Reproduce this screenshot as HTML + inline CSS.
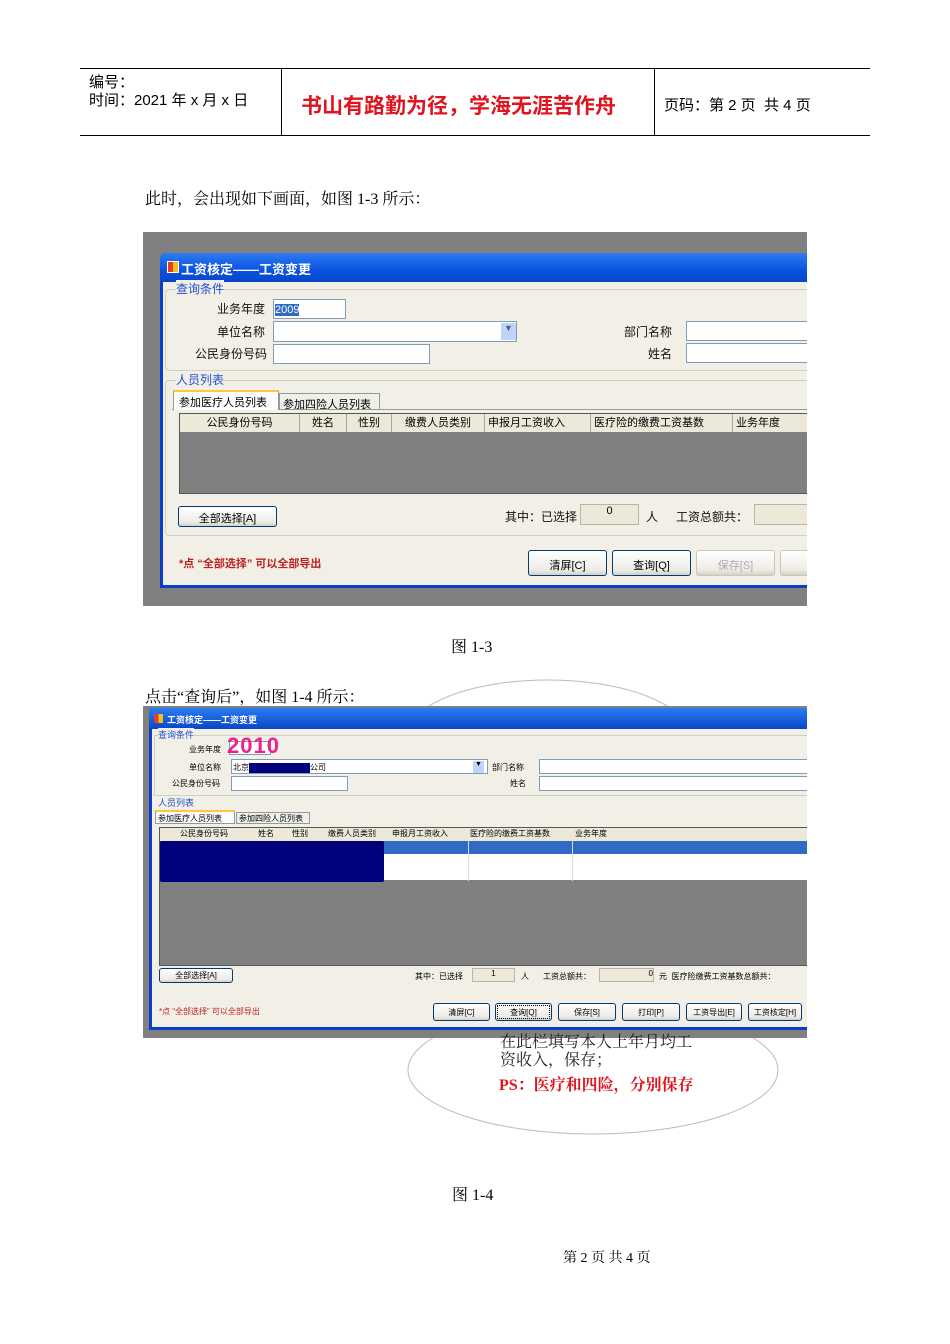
<!DOCTYPE html>
<html><head><meta charset="utf-8"><style>
*{margin:0;padding:0;box-sizing:border-box}
body{width:950px;height:1344px;background:#fff;position:relative;overflow:hidden;font-family:"Liberation Sans","Noto Sans CJK SC",sans-serif}
.a{position:absolute;white-space:nowrap}
.s{font-family:"Liberation Serif","Noto Serif CJK SC",serif}
.w{font-size:12px;color:#111}
.box{position:absolute;background:#fff;border:1px solid #7f9db9}
.btn{position:absolute;border:1px solid #003c74;border-radius:3px;background:linear-gradient(#fff,#ecebe6 80%,#d6d0c5);font-size:11px;text-align:center;color:#000}
.hd{position:absolute;background:#ece9d8;border-right:1px solid #aca899;font-size:11px;text-align:center;color:#000}
.bl{color:#2050d0}
</style></head><body>
<div class="a" style="left:80px;top:68px;width:790px;height:1px;background:#000"></div>
<div class="a" style="left:80px;top:135px;width:790px;height:1px;background:#000"></div>
<div class="a" style="left:281px;top:68px;width:1px;height:68px;background:#000"></div>
<div class="a" style="left:654px;top:68px;width:1px;height:68px;background:#000"></div>
<div class="a" style="left:89px;top:71px;font-size:15px">编号：</div>
<div class="a" style="left:89px;top:89px;font-size:15px">时间：2021 年 x 月 x 日</div>
<div class="a" style="left:301px;top:90px;font-size:21px;font-weight:bold;color:#e0141e">书山有路勤为径，学海无涯苦作舟</div>
<div class="a" style="left:664px;top:94px;font-size:15px">页码：第 2 页 &nbsp;共 4 页</div>

<div class="a s" style="left:145px;top:186px;font-size:16px">此时，会出现如下画面，如图 1-3 所示：</div>

<div class="a" style="left:143px;top:232px;width:664px;height:374px;background:#808080;overflow:hidden">
 <div class="a" style="left:17px;top:21px;width:660px;height:335px;background:#0a3ec8;border-radius:6px 0 0 0"></div>
 <div class="a" style="left:17px;top:21px;width:660px;height:29px;background:linear-gradient(#2c7cf0,#0a52e0 60%,#0846c8);border-radius:6px 0 0 0"></div>
 <div class="a" style="left:24px;top:29px;width:12px;height:12px;background:linear-gradient(90deg,#e04020 50%,#f0c020 50%);border:1px solid #fff"></div>
 <div class="a" style="left:38px;top:27px;font-size:13px;font-weight:bold;color:#fff">工资核定——工资变更</div>
 <div class="a" style="left:20px;top:50px;width:660px;height:303px;background:#f1efe6"></div>
 <div class="a" style="left:22px;top:57px;width:660px;height:82px;border:1px solid #d0d0bf;border-radius:4px"></div>
 <div class="a w bl" style="left:33px;top:48px;background:#f1efe6">查询条件</div>
 <div class="a w" style="left:74px;top:68px">业务年度</div>
 <div class="box" style="left:130px;top:67px;width:73px;height:20px"><span style="background:#316ac5;color:#fff;font-size:11px;margin:3px 1px;display:inline-block">2009</span></div>
 <div class="a w" style="left:74px;top:91px">单位名称</div>
 <div class="box" style="left:130px;top:89px;width:244px;height:21px"></div>
 <div class="a" style="left:358px;top:91px;width:15px;height:17px;background:#c1d3fb;font-size:9px;text-align:center;color:#4d6185">▼</div>
 <div class="a w" style="left:481px;top:91px">部门名称</div>
 <div class="box" style="left:543px;top:89px;width:130px;height:20px"></div>
 <div class="a w" style="left:52px;top:113px">公民身份号码</div>
 <div class="box" style="left:130px;top:112px;width:157px;height:20px"></div>
 <div class="a w" style="left:505px;top:113px">姓名</div>
 <div class="box" style="left:543px;top:111px;width:130px;height:20px"></div>
 <div class="a" style="left:22px;top:148px;width:660px;height:156px;border:1px solid #d0d0bf;border-radius:4px"></div>
 <div class="a w bl" style="left:33px;top:139px;background:#f1efe6">人员列表</div>
 <div class="a" style="left:29px;top:177px;width:660px;height:1px;background:#919b9c"></div>
 <div class="a" style="left:136px;top:161px;width:101px;height:17px;background:#f0f0ea;border:1px solid #919b9c;font-size:11px;padding:2px 3px">参加四险人员列表</div>
 <div class="a" style="left:30px;top:158px;width:106px;height:20px;background:#fcfcfe;border:1px solid #919b9c;border-bottom:none;border-top:2px solid #ffc83c;font-size:11px;padding:2px 5px">参加医疗人员列表</div>
 <div class="a" style="left:36px;top:181px;width:650px;height:81px;background:#808080;border:1px solid #555"></div>
 <div class="hd" style="left:37px;top:182px;width:120px;height:18px">公民身份号码</div>
 <div class="hd" style="left:157px;top:182px;width:47px;height:18px">姓名</div>
 <div class="hd" style="left:204px;top:182px;width:45px;height:18px">性别</div>
 <div class="hd" style="left:249px;top:182px;width:93px;height:18px">缴费人员类别</div>
 <div class="hd" style="left:342px;top:182px;width:106px;height:18px;text-align:left;padding-left:3px">申报月工资收入</div>
 <div class="hd" style="left:448px;top:182px;width:142px;height:18px;text-align:left;padding-left:3px">医疗险的缴费工资基数</div>
 <div class="hd" style="left:590px;top:182px;width:100px;height:18px;text-align:left;padding-left:3px">业务年度</div>
 <div class="btn" style="left:35px;top:274px;width:99px;height:21px;padding-top:3px">全部选择[A]</div>
 <div class="a w" style="left:362px;top:276px">其中：已选择</div>
 <div class="a" style="left:437px;top:272px;width:59px;height:21px;background:#ece9d8;border:1px solid #b8b4a8;font-size:11px;text-align:center">0</div>
 <div class="a w" style="left:503px;top:276px">人</div>
 <div class="a w" style="left:533px;top:276px">工资总额共：</div>
 <div class="a" style="left:611px;top:272px;width:60px;height:21px;background:#ece9d8;border:1px solid #b8b4a8"></div>
 <div class="a" style="left:36px;top:323px;font-size:11px;font-weight:bold;color:#c02020">*点 “全部选择” 可以全部导出</div>
 <div class="btn" style="left:385px;top:318px;width:79px;height:26px;padding-top:6px">清屏[C]</div>
 <div class="btn" style="left:469px;top:318px;width:79px;height:26px;padding-top:6px">查询[Q]</div>
 <div class="btn" style="left:553px;top:318px;width:79px;height:26px;padding-top:6px;color:#aaa;border-color:#c9c7ba">保存[S]</div>
 <div class="btn" style="left:637px;top:318px;width:79px;height:26px;border-color:#c9c7ba"></div>
</div>

<div class="a s" style="left:451px;top:634px;font-size:16px">图 1-3</div>

<svg class="a" style="left:400px;top:675px" width="300" height="40"><ellipse cx="148" cy="60" rx="140" ry="55" fill="none" stroke="#bbb" stroke-width="1"/></svg>
<div class="a s" style="left:145px;top:684px;font-size:16px">点击“查询后”，如图 1-4 所示：</div>

<div class="a" style="left:143px;top:706px;width:664px;height:332px;background:#808080;overflow:hidden">
 <div class="a" style="left:6px;top:2px;width:670px;height:322px;background:#0a3ec8"></div>
 <div class="a" style="left:6px;top:2px;width:670px;height:21px;background:linear-gradient(#2c7cf0,#0846c8)"></div>
 <div class="a" style="left:11px;top:8px;width:9px;height:9px;background:linear-gradient(90deg,#e04020 50%,#f0c020 50%)"></div>
 <div class="a" style="left:24px;top:7px;font-size:9px;font-weight:bold;color:#fff">工资核定——工资变更</div>
 <div class="a" style="left:9px;top:23px;width:670px;height:298px;background:#f1efe6"></div>
 <div class="a" style="left:11px;top:29px;width:670px;height:61px;border:1px solid #d0d0bf"></div>
 <div class="a bl" style="left:15px;top:22px;font-size:9px;background:#f1efe6">查询条件</div>
 <div class="a" style="left:46px;top:38px;font-size:8px">业务年度</div>
 <div class="box" style="left:86px;top:35px;width:42px;height:14px"></div>
 <div class="a" style="left:84px;top:27px;font-size:22px;font-weight:bold;color:#f0208c;letter-spacing:1px">2010</div>
 <div class="a" style="left:46px;top:56px;font-size:8px">单位名称</div>
 <div class="box" style="left:88px;top:53px;width:257px;height:15px;font-size:8px;padding:2px 1px">北京<span style="display:inline-block;width:61px;height:10px;background:#00007a;vertical-align:middle"></span>公司</div>
 <div class="a" style="left:330px;top:55px;width:11px;height:12px;background:#c1d3fb;font-size:7px;text-align:center">▼</div>
 <div class="a" style="left:349px;top:56px;font-size:8px">部门名称</div>
 <div class="box" style="left:396px;top:53px;width:280px;height:15px"></div>
 <div class="a" style="left:29px;top:72px;font-size:8px">公民身份号码</div>
 <div class="box" style="left:88px;top:70px;width:117px;height:15px"></div>
 <div class="a" style="left:367px;top:72px;font-size:8px">姓名</div>
 <div class="box" style="left:396px;top:70px;width:280px;height:15px"></div>
 <div class="a bl" style="left:15px;top:90px;font-size:9px;background:#f1efe6">人员列表</div>
 <div class="a" style="left:12px;top:104px;width:80px;height:14px;background:#fcfcfe;border:1px solid #919b9c;border-top:2px solid #ffc83c;font-size:8px;padding:1px 2px">参加医疗人员列表</div>
 <div class="a" style="left:93px;top:106px;width:74px;height:12px;background:#f0f0ea;border:1px solid #919b9c;font-size:8px;padding:0 2px">参加四险人员列表</div>
 <div class="a" style="left:16px;top:121px;width:660px;height:139px;background:#808080;border:1px solid #555"></div>
 <div class="a" style="left:17px;top:122px;width:660px;height:13px;background:#ece9d8"></div>
 <div class="a" style="left:17px;top:122px;font-size:8px;width:660px;height:13px">
  <span class="a" style="left:20px">公民身份号码</span><span class="a" style="left:98px">姓名</span><span class="a" style="left:132px">性别</span><span class="a" style="left:168px">缴费人员类别</span><span class="a" style="left:232px">申报月工资收入</span><span class="a" style="left:310px">医疗险的缴费工资基数</span><span class="a" style="left:415px">业务年度</span>
 </div>
 <div class="a" style="left:17px;top:135px;width:660px;height:13px;background:#316ac5"></div>
 <div class="a" style="left:17px;top:148px;width:660px;height:26px;background:#fff"></div>
 <div class="a" style="left:17px;top:135px;width:224px;height:41px;background:#00007a;border-radius:2px"></div>
 <div class="a" style="left:325px;top:135px;width:1px;height:40px;background:#ddd"></div>
 <div class="a" style="left:429px;top:135px;width:1px;height:40px;background:#ddd"></div>
 <div class="btn" style="left:16px;top:262px;width:74px;height:15px;font-size:8px;padding-top:1px">全部选择[A]</div>
 <div class="a" style="left:272px;top:265px;font-size:8px">其中：已选择</div>
 <div class="a" style="left:329px;top:262px;width:43px;height:14px;background:#ece9d8;border:1px solid #b8b4a8;font-size:8px;text-align:center">1</div>
 <div class="a" style="left:378px;top:265px;font-size:8px">人</div>
 <div class="a" style="left:400px;top:265px;font-size:8px">工资总额共：</div>
 <div class="a" style="left:456px;top:262px;width:55px;height:14px;background:#ece9d8;border:1px solid #b8b4a8;font-size:8px;text-align:right">0</div>
 <div class="a" style="left:516px;top:265px;font-size:8px">元 &nbsp;医疗险缴费工资基数总额共：</div>
 <div class="a" style="left:16px;top:300px;font-size:8px;color:#c02020">*点 “全部选择” 可以全部导出</div>
 <div class="btn" style="left:290px;top:297px;width:57px;height:18px;font-size:8px;padding-top:3px">清屏[C]</div>
 <div class="btn" style="left:352px;top:297px;width:57px;height:18px;font-size:8px;padding-top:3px;outline:1px dotted #000;outline-offset:-3px">查询[Q]</div>
 <div class="btn" style="left:415px;top:297px;width:58px;height:18px;font-size:8px;padding-top:3px">保存[S]</div>
 <div class="btn" style="left:479px;top:297px;width:58px;height:18px;font-size:8px;padding-top:3px">打印[P]</div>
 <div class="btn" style="left:543px;top:297px;width:56px;height:18px;font-size:8px;padding-top:3px">工资导出[E]</div>
 <div class="btn" style="left:605px;top:297px;width:54px;height:18px;font-size:8px;padding-top:3px">工资核定[H]</div>
</div>

<svg class="a" style="left:400px;top:1038px" width="390" height="105"><ellipse cx="193" cy="32" rx="185" ry="64" fill="none" stroke="#bbb" stroke-width="1"/></svg>
<div class="a s" style="left:500px;top:1034px;font-size:16px;line-height:18px;color:#222">在此栏填写本人上年月均工<br>资收入，保存；</div>
<div class="a s" style="left:499px;top:1072px;font-size:16px;font-weight:bold;color:#e0141e">PS：医疗和四险，分别保存</div>

<div class="a s" style="left:452px;top:1182px;font-size:16px">图 1-4</div>
<div class="a s" style="left:563px;top:1247px;font-size:14px">第 2 页 共 4 页</div>
</body></html>
